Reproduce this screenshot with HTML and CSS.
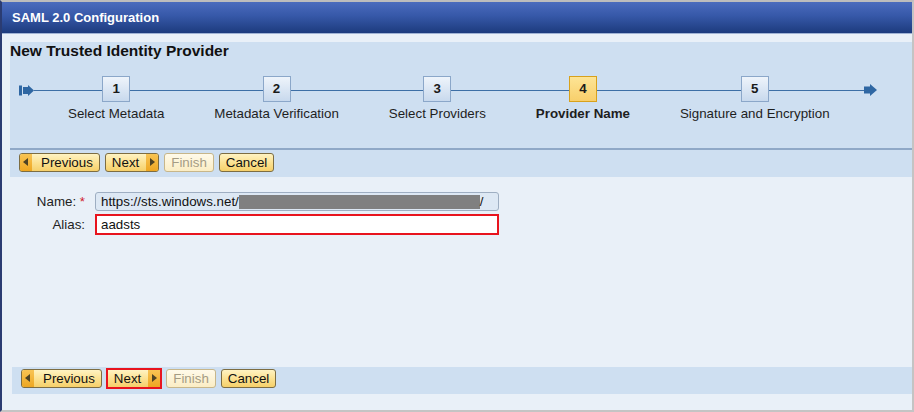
FILE: index.html
```html
<!DOCTYPE html>
<html lang="en">
<head>
    <meta charset="UTF-8" />
    <title>SAML 2.0 Configuration</title>
    <link rel="stylesheet" href="styles.css">
</head>
<body>
<div class="frame">
    <div class="titlebar">SAML 2.0 Configuration</div>

    <div class="content">
        <!-- Wizard header -->
        <div class="panel">
            <div class="panel-title">New Trusted Identity Provider</div>

            <div class="roadmap">
                <svg class="rm-start" width="15" height="11" viewBox="0 0 15 11">
                    <rect x="0" y="0.5" width="3" height="10" fill="#2f67a3"/>
                    <path d="M4 2 H9 V0 L15 5.5 L9 11 V9 H4 Z" fill="#2f67a3"/>
                </svg>
                <div class="track">
                    <div class="step">
                        <div class="step-box">1</div>
                        <div class="step-label">Select Metadata</div>
                    </div>
                    <div class="step">
                        <div class="step-box">2</div>
                        <div class="step-label">Metadata Verification</div>
                    </div>
                    <div class="step">
                        <div class="step-box">3</div>
                        <div class="step-label">Select Providers</div>
                    </div>
                    <div class="step active">
                        <div class="step-box">4</div>
                        <div class="step-label">Provider Name</div>
                    </div>
                    <div class="step">
                        <div class="step-box">5</div>
                        <div class="step-label">Signature and Encryption</div>
                    </div>
                </div>
                <svg class="rm-end" width="13" height="12" viewBox="0 0 13 12">
                    <path d="M0 2.5 H6 V0 L13 6 L6 12 V9.5 H0 Z" fill="#2f67a3"/>
                </svg>
            </div>

            <div class="toolbar">
                <button class="btn btn-prev"><span class="ico ico-left"></span><span class="txt">Previous</span></button>
                <button class="btn btn-next"><span class="txt">Next</span><span class="ico ico-right"></span></button>
                <button class="btn disabled"><span class="txt">Finish</span></button>
                <button class="btn"><span class="txt">Cancel</span></button>
            </div>
        </div>

        <!-- Form -->
        <div class="form">
            <div class="form-label">Name: <span class="req">*</span></div>
            <div class="field readonly">https://sts.windows.net/<span class="mask"></span>/</div>

            <div class="form-label">Alias:</div>
            <input class="field highlight" type="text" value="aadsts">
        </div>

        <div class="toolbar bottom">
            <button class="btn btn-prev"><span class="ico ico-left"></span><span class="txt">Previous</span></button>
            <button class="btn btn-next marked"><span class="txt">Next</span><span class="ico ico-right"></span></button>
            <button class="btn disabled"><span class="txt">Finish</span></button>
            <button class="btn"><span class="txt">Cancel</span></button>
        </div>
    </div>
</div>
</body>
</html>
```

FILE: styles.css
```css
body {
    margin: 0;
    background: #ffffff;
    font-family: "Liberation Sans", Arial, sans-serif;
    font-size: 13.33px;
    color: #1a1a1a;
}

.frame {
    width: 914px;
    height: 412px;
    box-sizing: border-box;
    border-top: 2px solid #bdbdbd;
    border-left: 2px solid #2b3c72;
    border-right: 2px solid #c4c4c4;
    border-bottom: 2px solid #c4c4c4;
    background: #e9f0f8;
    display: flex;
    flex-direction: column;
}

.titlebar {
    height: 31px;
    line-height: 31px;
    padding-left: 10px;
    color: #ffffff;
    font-weight: bold;
    font-size: 13px;
    background: linear-gradient(#4b6cbd 0%, #3658a8 45%, #1d3b7d 100%);
    border-bottom: 1px solid #9fb2d4;
}

.content {
    flex: 1;
    display: flex;
    flex-direction: column;
    padding-top: 8px;
}

.panel {
    margin-left: 8px;
    background: #cedff1;
}

.panel-title {
    height: 18px;
    line-height: 18px;
    font-size: 15.5px;
    font-weight: bold;
    color: #111;
}

/* Roadmap */
.roadmap {
    display: flex;
    align-items: flex-start;
    margin-top: 16px;
    padding-left: 9px;
    height: 72px;
}

.rm-start {
    margin-top: 9px;
}

.rm-end {
    margin-top: 8px;
}

.track {
    display: flex;
    padding: 0 9px 0 9px;
    background: linear-gradient(#3d6fa6, #3d6fa6) no-repeat 0 14px / 100% 1px;
}

.step {
    display: flex;
    flex-direction: column;
    align-items: center;
    padding: 0 25px;
}

.step-box {
    width: 26px;
    height: 24px;
    line-height: 24px;
    text-align: center;
    font-weight: bold;
    font-size: 13.33px;
    border: 1px solid #8ba7c9;
    background: linear-gradient(#eef4fb, #c8d9ed);
}

.step.active .step-box {
    border-color: #d8a11c;
    background: linear-gradient(#fde495, #f8cf6b);
}

.step-label {
    margin-top: 4px;
    line-height: 16px;
    white-space: nowrap;
    color: #1e1e1e;
}

.step.active .step-label {
    font-weight: bold;
}

/* Toolbars and buttons */
.toolbar {
    display: flex;
    gap: 5px;
    height: 29px;
    padding: 3px 0 0 9px;
    box-sizing: border-box;
    border-top: 2px solid #8fa8c7;
    background: #cedff1;
}

.toolbar.bottom {
    height: 27px;
    margin: 0 0 16px 10px;
    border-top: none;
    padding: 2px 0 0 9px;
}

.btn {
    display: flex;
    align-items: stretch;
    height: 19px;
    padding: 0;
    margin: 0;
    border: 1px solid #7d6d42;
    border-radius: 3px;
    background: linear-gradient(#fff3c2, #fbe08e 55%, #f6d06a);
    font-family: "Liberation Sans", Arial, sans-serif;
    font-size: 13.33px;
    color: #111;
    overflow: hidden;
}

.btn .txt {
    line-height: 17px;
    padding: 0 6px;
}

.btn-prev .txt {
    padding-left: 9px;
}

.btn-next .txt {
    padding: 0 7px 0 6px;
}

.btn.disabled {
    border-color: #c7b68a;
    background: linear-gradient(#fffaea, #fbedc4);
    color: #a59c84;
}

.btn.marked {
    border-radius: 0;
    outline: 2px solid #e8141e;
    outline-offset: -1px;
}

.ico {
    width: 12px;
    position: relative;
    background: linear-gradient(#f8c454, #eea722);
}

.ico::after {
    content: "";
    position: absolute;
    top: 4px;
    border-top: 4.5px solid transparent;
    border-bottom: 4.5px solid transparent;
}

.ico-left::after {
    left: 3px;
    border-right: 5px solid #4e4324;
}

.ico-right::after {
    left: 4px;
    border-left: 5px solid #4e4324;
}

/* Form */
.form {
    flex: 1;
    display: grid;
    grid-template-columns: 84px 404px;
    grid-auto-rows: min-content;
    column-gap: 9px;
    row-gap: 3px;
    padding-top: 15px;
    align-items: center;
}

.form-label {
    text-align: right;
    padding-right: 1px;
    color: #222;
}

.req {
    color: #d0202a;
}

.field {
    box-sizing: border-box;
    font-family: "Liberation Sans", Arial, sans-serif;
    font-size: 13.33px;
    color: #111;
    margin: 0;
}

.field.readonly {
    height: 19px;
    line-height: 17px;
    padding-left: 5px;
    border: 1px solid #9eaec2;
    border-radius: 3px;
    background: #dde8f4;
    display: flex;
    align-items: center;
}

.mask {
    display: inline-block;
    width: 241px;
    height: 14px;
    background: #808080;
}

.field.highlight {
    height: 21px;
    padding: 0 0 0 4px;
    border: 2px solid #e8141e;
    background: #ffffff;
    outline: none;
}
```
